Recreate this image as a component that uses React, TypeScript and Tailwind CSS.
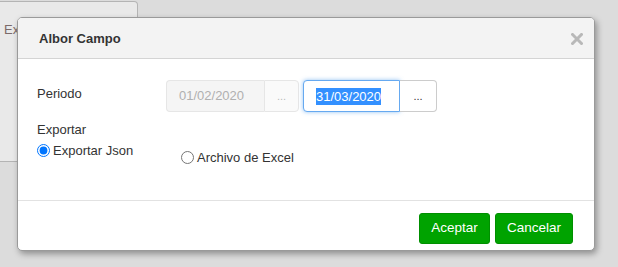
import React from 'react';

const font = { fontFamily: '"Liberation Sans", Arial, sans-serif' };

export default function App() {
    return (
        <div className="relative w-[618px] h-[267px] overflow-hidden bg-[#dcdcdc] text-[13px] text-[#333]" style={font}>
            {/* ventana de fondo, tapada casi entera por el modal */}
            <div className="w-[138px] h-[161px] mt-px bg-[#e9e9e9] border border-[#b4b4b4] border-l-0 rounded-tr-[4px] pt-[18px] pl-[4px] text-[#7a6a6a]">
                Ex
            </div>

            {/* modal */}
            <div className="absolute left-[17px] top-[17px] w-[578px] h-[234px] bg-white border border-[#9a9a9a] rounded-[5px] shadow-[2px_3px_6px_rgba(0,0,0,0.35)] flex flex-col overflow-hidden">
                <div className="h-[41px] shrink-0 bg-[#f3f3f3] border-b border-[#d4d4d4] flex items-center justify-between pl-[21px] pr-[11px]">
                    <span className="font-bold text-[13px] text-[#333] mt-px">Albor Campo</span>
                    <svg width="12" height="12" viewBox="0 0 12 12" className="mt-px">
                        <path d="M1.5 1.5 L10.5 10.5 M10.5 1.5 L1.5 10.5" stroke="#b8b8b8" strokeWidth="3" strokeLinecap="square" />
                    </svg>
                </div>

                <div className="flex-1 pl-[19px] pt-[21px]">
                    <div className="flex items-center h-[32px]">
                        <span className="w-[129px] -mt-[5px]">Periodo</span>
                        <div className="flex">
                            <div className="w-[98px] h-[32px] bg-[#f5f5f5] border border-[#e6e6e6] border-r-0 rounded-l-[4px] flex items-center pl-[12px] text-[#b0b0b0]">01/02/2020</div>
                            <div className="w-[35px] h-[32px] bg-[#fafafa] border border-[#e6e6e6] rounded-r-[4px] flex items-center justify-center text-[#bbb] text-[11px]">...</div>
                        </div>
                        <div className="flex ml-[4px]">
                            <div className="w-[97px] h-[32px] bg-white border border-[#66a9f0] rounded-l-[4px] shadow-[0_0_4px_rgba(102,169,240,0.7)] flex items-center pl-[12px]">
                                <span className="bg-[#3390ff] text-white leading-[17px]">31/03/2020</span>
                            </div>
                            <div className="w-[37px] h-[32px] bg-white border border-[#cccccc] border-l-0 rounded-r-[4px] flex items-center justify-center text-[#333] text-[11px]">...</div>
                        </div>
                    </div>

                    <div className="mt-[9px] leading-[18px]">Exportar</div>
                    <div className="flex items-start mt-[2px]">
                        <label className="flex items-center w-[144px]">
                            <input type="radio" name="exp" defaultChecked className="w-[13px] h-[13px] m-0 mr-[3px] accent-[#0075ff]" />
                            <span>Exportar Json</span>
                        </label>
                        <label className="flex items-center mt-[7px]">
                            <input type="radio" name="exp" className="w-[13px] h-[13px] m-0 mr-[3px]" />
                            <span>Archivo de Excel</span>
                        </label>
                    </div>
                </div>

                <div className="h-[50px] shrink-0 border-t border-[#e2e2e2] flex items-start justify-end gap-[5px] pt-[12px] pr-[21px]">
                    <button className="w-[71px] h-[31px] bg-[#00a300] rounded-[3px] border border-[#008f00] text-white text-[13.5px]">Aceptar</button>
                    <button className="w-[78px] h-[31px] bg-[#00a300] rounded-[3px] border border-[#008f00] text-white text-[13.5px]">Cancelar</button>
                </div>
            </div>
        </div>
    );
}
